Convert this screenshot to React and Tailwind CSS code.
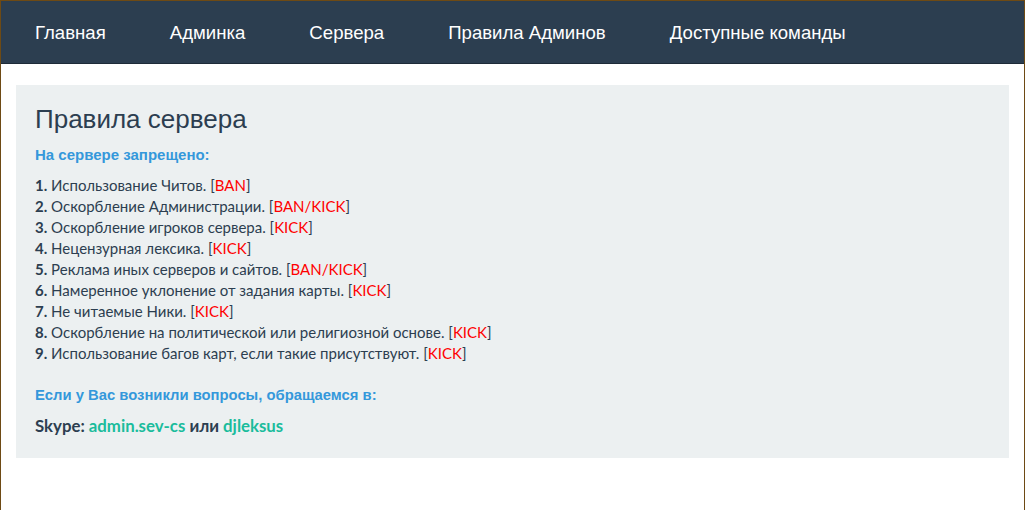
import React from "react";

const rules = [
  ["Использование Читов.", "BAN"],
  ["Оскорбление Администрации.", "BAN/KICK"],
  ["Оскорбление игроков сервера.", "KICK"],
  ["Нецензурная лексика.", "KICK"],
  ["Реклама иных серверов и сайтов.", "BAN/KICK"],
  ["Намеренное уклонение от задания карты.", "KICK"],
  ["Не читаемые Ники.", "KICK"],
  ["Оскорбление на политической или религиозной основе.", "KICK"],
  ["Использование багов карт, если такие присутствуют.", "KICK"],
];

const nav = ["Главная", "Админка", "Сервера", "Правила Админов", "Доступные команды"];

export default function App() {
  return (
    <div className="w-[1025px] h-[510px] bg-white border-t border-l border-r border-[#6e4a14] font-['Liberation_Sans',Arial,sans-serif] overflow-hidden">
      <div className="h-[63px] bg-[#2c3e50] border-b border-[#1e2b38] flex items-center pl-[2px] pt-[3px]">
        {nav.map((n) => (
          <div key={n} className="px-8 text-white text-[18.6px] leading-none">{n}</div>
        ))}
      </div>
      <div className="pt-[21px] pl-[15px] pr-[15px]">
        <div className="bg-[#ecf0f1] px-[19px] pt-[19px] pb-[22px]">
          <h1 className="text-[26px] leading-[30px] text-[#2c3e50]">Правила сервера</h1>
          <div className="mt-[12px] text-[15px] leading-[18px] font-bold text-[#3498db]">На сервере запрещено:</div>
          <ol className="mt-[11px] font-['Lato',sans-serif] text-[15px] leading-[21px] text-[#2c3e50]">
            {rules.map(([t, p], i) => (
              <li key={i}>
                <b>{i + 1}.</b> {t} [<span className="text-[#ff0000]">{p}</span>]
              </li>
            ))}
          </ol>
          <div className="mt-[22px] text-[14.8px] leading-[18px] font-bold text-[#3498db]">Если у Вас возникли вопросы, обращаемся в:</div>
          <div className="mt-[12px] font-['Lato',sans-serif] text-[16.8px] leading-[20px] font-bold text-[#2c3e50]">
            Skype: <span className="text-[#1abc9c]">admin.sev-cs</span> или <span className="text-[#1abc9c]">djleksus</span>
          </div>
        </div>
      </div>
    </div>
  );
}
